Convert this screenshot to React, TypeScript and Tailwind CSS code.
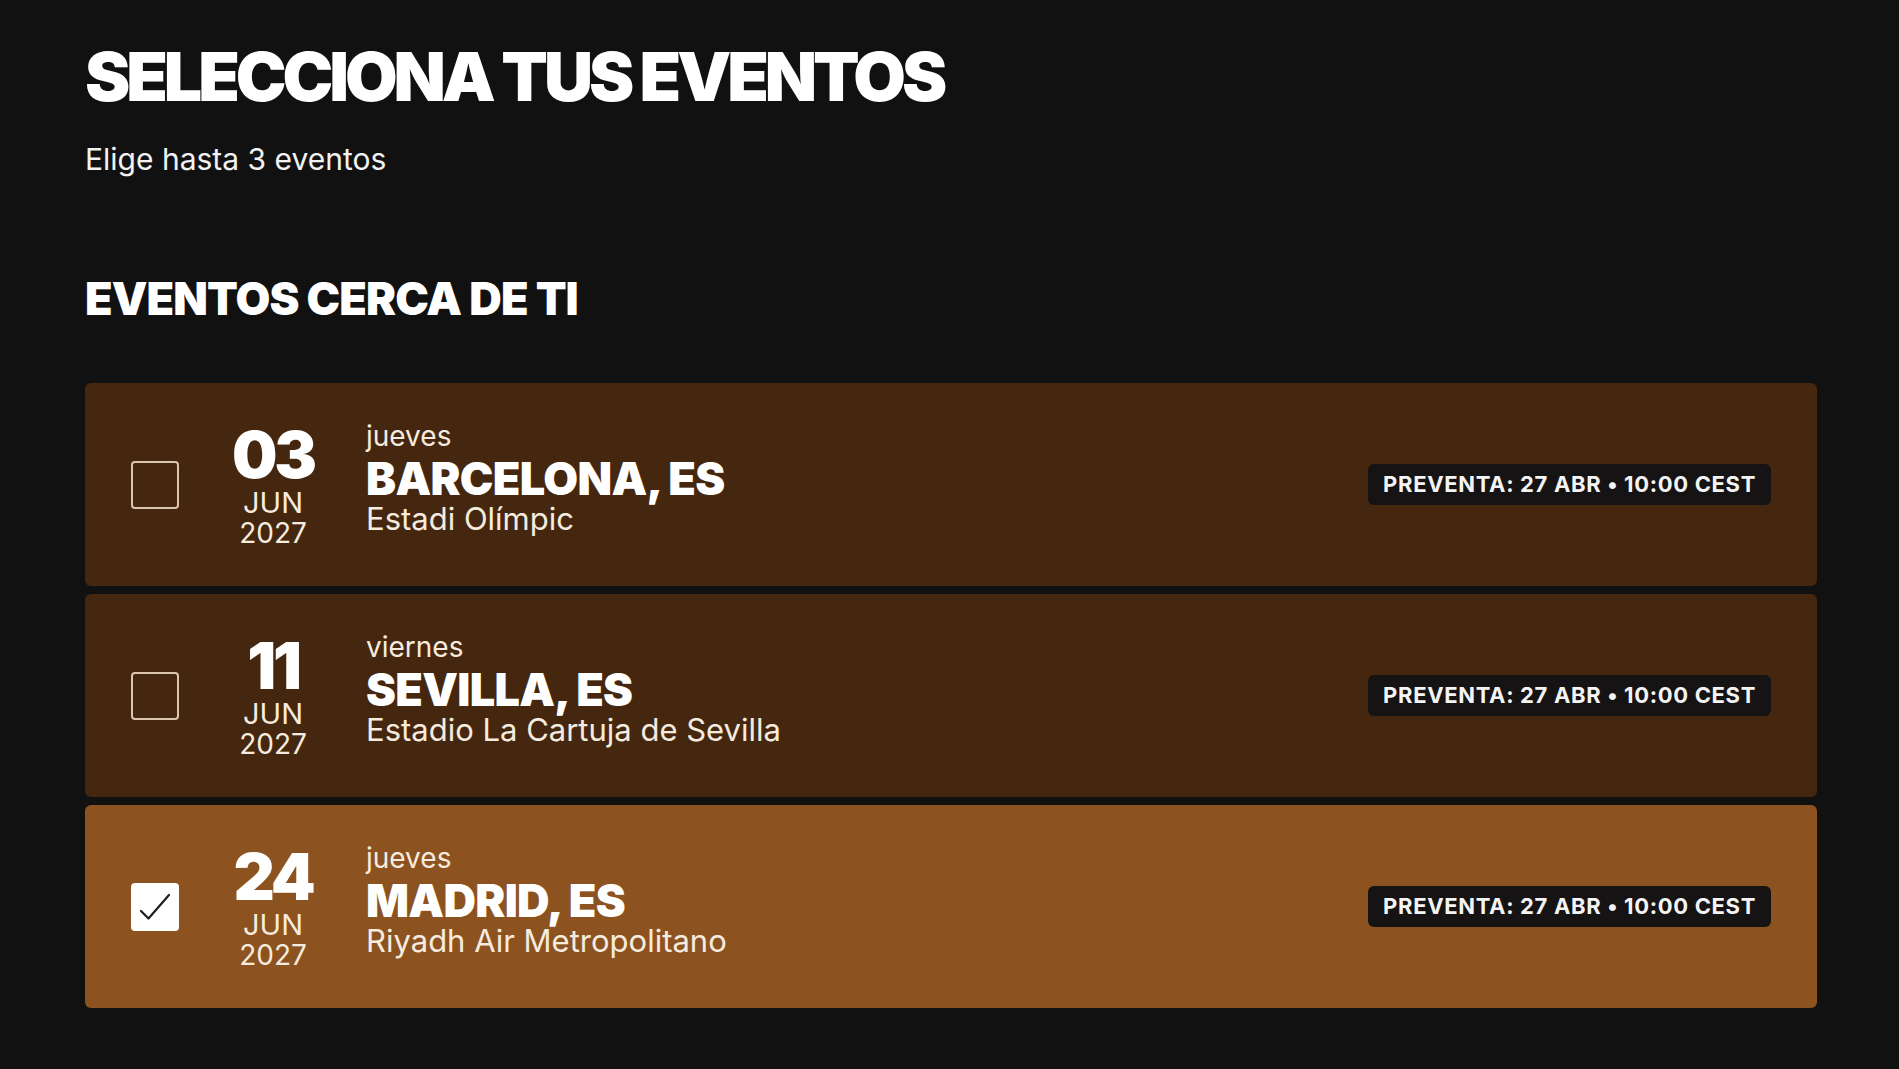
import { useState } from "react";

type EventItem = {
  id: string;
  day: string;
  month: string;
  year: string;
  weekday: string;
  city: string;
  venue: string;
  presale: string;
};

const EVENTS: EventItem[] = [
  { id: "bcn", day: "03", month: "JUN", year: "2027", weekday: "jueves", city: "BARCELONA, ES", venue: "Estadi Olímpic", presale: "PREVENTA: 27 ABR • 10:00 CEST" },
  { id: "svq", day: "11", month: "JUN", year: "2027", weekday: "viernes", city: "SEVILLA, ES", venue: "Estadio La Cartuja de Sevilla", presale: "PREVENTA: 27 ABR • 10:00 CEST" },
  { id: "mad", day: "24", month: "JUN", year: "2027", weekday: "jueves", city: "MADRID, ES", venue: "Riyadh Air Metropolitano", presale: "PREVENTA: 27 ABR • 10:00 CEST" },
];

function Checkbox({ checked }: { checked: boolean }) {
  return (
    <span
      className={`flex h-[48px] w-[48px] shrink-0 items-center justify-center rounded-[4px] ${
        checked ? "bg-white" : "border-2 border-[#dcc6b0]"
      }`}
    >
      {checked && (
        <svg width="48" height="48" viewBox="0 0 48 48" fill="none">
          <path d="M10 28 L17.5 35.5 L38 12" stroke="#1f1f1f" strokeWidth="2.2" strokeLinecap="round" strokeLinejoin="round" />
        </svg>
      )}
    </span>
  );
}

function EventRow({ ev, selected, onToggle }: { ev: EventItem; selected: boolean; onToggle: () => void }) {
  return (
    <button
      onClick={onToggle}
      className={`flex h-[203px] w-full items-center rounded-[6px] pl-[46px] pr-[46px] text-left ${
        selected ? "bg-[#8c5220]" : "bg-[#45270f]"
      }`}
    >
      <Checkbox checked={selected} />

      {/* Date */}
      <div className="ml-[44px] flex w-[100px] shrink-0 flex-col items-center">
        <span className="text-[64px] font-black leading-[66px] tracking-[-0.05em] text-white">{ev.day}</span>
        <span className="text-[29px] leading-[30px] text-[#f6ebdf]">{ev.month}</span>
        <span className="text-[28px] leading-[30px] text-[#f6ebdf]">{ev.year}</span>
      </div>

      {/* Place */}
      <div className="ml-[43px] flex flex-1 flex-col pb-[18px]">
        <span className="text-[28px] leading-[38px] text-[#f6ebdf]">{ev.weekday}</span>
        <span className="text-[45px] font-black leading-[48px] tracking-[-0.015em] text-white">{ev.city}</span>
        <span className="text-[31px] leading-[32px] text-[#f6ebdf]">{ev.venue}</span>
      </div>

      <span className="flex h-[41px] shrink-0 items-center rounded-[6px] bg-[#151313] px-[15px] text-[22px] font-bold tracking-[0.03em] text-[#f4f4f4]">
        {ev.presale}
      </span>
    </button>
  );
}

export default function App() {
  const [selected, setSelected] = useState<string[]>(["mad"]);

  const toggle = (id: string) => {
    setSelected((prev) =>
      prev.includes(id) ? prev.filter((x) => x !== id) : prev.length >= 3 ? prev : [...prev, id]
    );
  };

  return (
    <div
      className="min-h-[1069px] bg-[#111111] pl-[85px] pr-[82px] pt-[40px] text-white"
      style={{ fontFamily: "Inter, 'Noto Sans', sans-serif" }}
    >
      <h1 className="text-[68px] font-black leading-[72px] tracking-[-0.06em] text-white">SELECCIONA TUS EVENTOS</h1>
      <p className="mt-[30px] text-[30px] leading-[34px] text-[#f2f2f2]">Elige hasta 3 eventos</p>

      <h2 className="mt-[100px] text-[45px] font-black leading-[45px] tracking-[-0.02em] text-white">EVENTOS CERCA DE TI</h2>

      <div className="mt-[62px] flex flex-col gap-[8px]">
        {EVENTS.map((ev) => (
          <EventRow key={ev.id} ev={ev} selected={selected.includes(ev.id)} onToggle={() => toggle(ev.id)} />
        ))}
      </div>
    </div>
  );
}
